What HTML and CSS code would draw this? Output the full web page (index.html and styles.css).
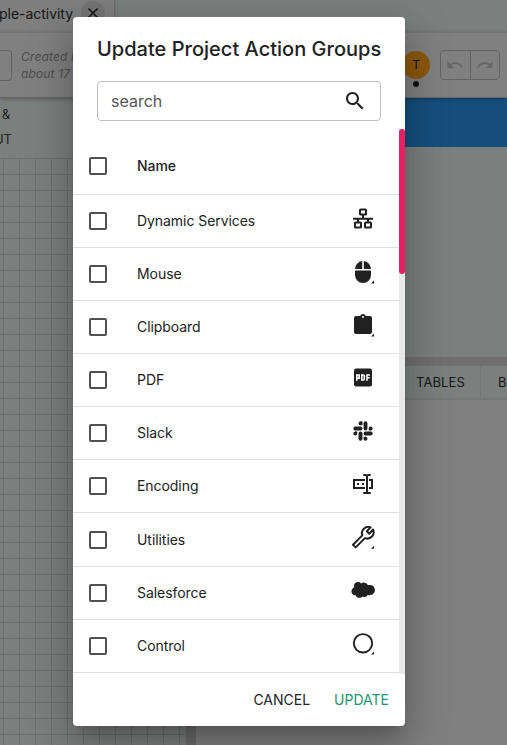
FILE: index.html
```html
<!DOCTYPE html>
<html lang="en">
<head>
<meta charset="utf-8">
<title>Update Project Action Groups</title>
<link rel="stylesheet" href="styles.css">
</head>
<body>
<div class="app">
  <div class="tabbar">
    <div class="file-tab"><span>ple-activity</span><span class="close"><svg width="12" height="12" viewBox="0 0 12 12"><path d="M1.500 1.500l9 9M10.500 1.500l-9 9" stroke="#111" stroke-width="1.500"/></svg></span></div>
  </div>
  <div class="toolbar">
    <div class="field-end"></div>
    <div class="created">Created by<br>about 17</div>
    <div class="presence"><div class="avatar">T</div><div class="dot"></div></div>
    <div class="history">
      <span><svg width="18" height="18" viewBox="0 0 24 24"><path d="M12.500 8c-2.650 0-5.050 1-6.900 2.600L2 7v9h9l-3.620-3.620c1.390-1.160 3.160-1.880 5.120-1.880 3.540 0 6.550 2.310 7.600 5.500l2.370-.78C21.080 11.030 17.150 8 12.500 8z"/></svg></span>
      <span><svg width="18" height="18" viewBox="0 0 24 24"><path d="M18.400 10.600C16.550 9 14.150 8 11.500 8c-4.650 0-8.580 3.030-9.960 7.220L3.900 16c1.050-3.190 4.050-5.500 7.600-5.500 1.950 0 3.730.72 5.120 1.880L13 16h9V7l-3.600 3.600z"/></svg></span>
    </div>
  </div>
  <div class="workspace">
    <div class="left">
      <div class="left-head"><span class="amp">&amp;</span><span>UT</span></div>
      <div class="canvas"></div>
    </div>
    <div class="split-v"></div>
    <div class="right">
      <div class="blue"></div>
      <div class="preview"></div>
      <div class="split-h"></div>
      <div class="tabs"><span class="tab tab-first">TABLES</span><span class="tab">B</span></div>
      <div class="output"></div>
    </div>
  </div>
</div>

<div class="dialog">
  <h2>Update Project Action Groups</h2>
  <div class="search"><span>search</span><svg width="24" height="24" viewBox="0 0 24 24"><path d="M15.500 14h-.79l-.28-.27C15.410 12.590 16 11.110 16 9.500 16 5.910 13.090 3 9.500 3S3 5.910 3 9.500 5.910 16 9.500 16c1.610 0 3.090-.59 4.230-1.570l.27.28v.79l5 4.990L20.490 19l-4.990-5zm-6 0C7.010 14 5 11.990 5 9.500S7.010 5 9.500 5 14 7.010 14 9.500 11.990 14 9.500 14z"/></svg></div>
  <div class="scroller">
    <div class="list">
      <div class="row head"><i class="box"></i><span>Name</span></div>
      <div class="row"><i class="box"></i><span>Dynamic Services</span>
        <svg class="icon" viewBox="0 0 24 24"><g fill="none" stroke="#212121" stroke-width="2"><rect x="9" y="2.500" width="6" height="5" rx=".6"/><rect x="4" y="15.500" width="6" height="5" rx=".6"/><rect x="14" y="15.500" width="6" height="5" rx=".6"/><path d="M12 7.500v4M2 11.700h20M7 12v3.500M17 12v3.500"/></g></svg></div>
      <div class="row"><i class="box"></i><span>Mouse</span>
        <svg class="icon" viewBox="0 0 24 24"><path d="M11.200 1.100V9H4a8 8 0 0 1 7.200-7.900zM12.800 1.100V9H20a8 8 0 0 0-7.200-7.900zM4 10.600h16V15a8 8 0 0 1-16 0z"/><path d="M23 20.500v3h-3z"/></svg></div>
      <div class="row"><i class="box"></i><span>Clipboard</span>
        <svg class="icon" viewBox="0 0 24 24"><path fill-rule="evenodd" d="M5 3h4.180a3 3 0 0 1 5.640 0H19a2 2 0 0 1 2 2v14a2 2 0 0 1-2 2H5a2 2 0 0 1-2-2V5a2 2 0 0 1 2-2zm7 0a1 1 0 1 0 0 2 1 1 0 0 0 0-2z"/><path d="M23 20.500v3h-3z"/></svg></div>
      <div class="row"><i class="box"></i><span>PDF</span>
        <svg class="icon" viewBox="0 0 24 24"><rect x="3" y="2.500" width="18" height="18" rx="2"/><g fill="none" stroke="#fff" stroke-width="1.600"><path d="M5.800 14.800V9h2.400v3.200H6M10.800 9h1.600q.9 0 .9.900v3.200q0 .9-.9.900h-1.600zM16 14.800V9h3M16 11.800h2.700"/></g></svg></div>
      <div class="row"><i class="box"></i><span>Slack</span>
        <svg class="icon" viewBox="0 0 24 24"><g stroke="#212121" stroke-width="3.900" stroke-linecap="round"><path d="M9.500 4.300v.01M4.300 9.500h5.200M14.500 4.300v5.200M19.700 9.500v.01M14.500 14.500h5.200M9.500 14.500v5.200M4.300 14.500v.01M14.500 19.700v.01"/></g><path d="M9.500 2.400h1.900v3.800H9.500zM17.800 9.500h1.900v1.900h-1.900zM12.600 17.800h1.900v1.900h-1.900zM4.300 12.600h1.900v1.900H4.300z"/></svg></div>
      <div class="row"><i class="box"></i><span>Encoding</span>
        <svg class="icon" viewBox="0 0 24 24"><g fill="none" stroke="#212121" stroke-width="2"><path d="M14 8H3v8h11M18 8h3v8h-3M12.300 3h1.700q2 0 2 1.600v14.800q0 1.600-2 1.600h-1.700M19.700 3H18q-2 0-2 1.600M16 19.400Q16 21 18 21h1.700"/></g><path d="M6 11h2v2H6zM11 11h2v2h-2z"/></svg></div>
      <div class="row"><i class="box"></i><span>Utilities</span>
        <svg class="icon" viewBox="0 0 24 24"><path d="M22 3.200a6.300 6.300 0 0 1-8 8.600L4.700 21.100 2 18.400l9.300-9.300a6.300 6.300 0 0 1 8.300-8L15.800 5l2.500 2.500z" transform="translate(0 .3)" fill="none" stroke="#212121" stroke-width="2" stroke-linejoin="round"/><path d="M23 19.800v3h-3z"/></svg></div>
      <div class="row"><i class="box"></i><span>Salesforce</span>
        <svg class="icon" viewBox="0 0 24 24"><path d="M10 5.300C8.600 3.300 4.600 3.200 3.300 6.200c-.5 1.100-.4 2.100 0 2.900C-.8 11-.5 17.200 4.600 17.100c1.100 3 5 3.500 6.900 1.200 1.600 1.200 4.300.6 5.200-1.300 3.800.9 7.200-1.200 7.200-5 0-4-3.700-6-7-4.800-1.200-2.800-4.900-3.600-6.900-1.900z" transform="translate(0 -.9)"/></svg></div>
      <div class="row"><i class="box"></i><span>Control</span>
        <svg class="icon" viewBox="0 0 24 24"><circle cx="12" cy="11.300" r="9.200" fill="none" stroke="#212121" stroke-width="1.900"/><path d="M23 19.500v3h-3z"/></svg></div>
    </div>
    <div class="track"><div class="thumb"></div></div>
  </div>
  <div class="actions"><span>CANCEL</span><span class="update">UPDATE</span></div>
</div>
</body>
</html>
```
FILE: styles.css
```css
* { box-sizing: border-box; }
body { margin: 0; width: 507px; height: 745px; overflow: hidden; font-family: Inter, "Liberation Sans", sans-serif; color: #212121; }
svg { display: block; flex: none; }
.app { display: flex; flex-direction: column; width: 507px; height: 745px; background: #7b7f7d; }
.tabbar { height: 32px; flex: none; }
.file-tab { width: 114px; height: 32px; display: flex; align-items: center; gap: 8px; padding-bottom: 6px; background: #7f7f7f; font-size: 14px; letter-spacing: -.03px; color: #151515; box-shadow: 1px 0 2px #666; white-space: nowrap; }
.file-tab span:first-child { margin-left: -1px; }
.close { width: 24px; height: 24px; border-radius: 50%; background: #757575; display: flex; align-items: center; justify-content: center; }
.toolbar { position: relative; height: 66px; flex: none; display: flex; align-items: center; background: #808080; border-top: 1px solid #747474; border-bottom: 1px solid #666; box-shadow: 0 1px 4px rgba(0,0,0,.3); }
.field-end { width: 12px; height: 31px; flex: none; border: 1px solid #626262; border-left: 0; border-radius: 0 4px 4px 0; }
.created { width: 381px; flex: none; margin-left: 9px; font-size: 12px; line-height: 17px; font-style: italic; color: #4d4d4d; letter-spacing: .15px; }
.presence { width: 28px; height: 39px; flex: none; display: flex; flex-direction: column; align-items: center; gap: 2px; margin-top: 11px; }
.avatar { width: 28px; height: 28px; flex: none; border-radius: 50%; background: #8c580d; font-size: 12px; line-height: 28px; text-align: center; color: #111; }
.dot { width: 6px; height: 6px; border-radius: 50%; background: #111; }
.history { display: flex; flex: none; width: 60px; height: 30px; margin-left: 10px; border: 1px solid #646464; border-radius: 4px; }
.history span { flex: 1; display: flex; align-items: center; justify-content: center; }
.history span + span { border-left: 1px solid #646464; }
.history svg { fill: #686868; }
.workspace { flex: 1; display: flex; min-height: 0; }
.left { width: 186px; display: flex; flex-direction: column; }
.left-head { width: 12px; height: 60px; padding-top: 4px; display: flex; flex-direction: column; align-items: flex-end; font-size: 13px; line-height: 25px; color: #222; }
.amp { margin-right: 2px; }
.canvas { flex: 1; background-image: linear-gradient(#6d706e 1px, transparent 1px), linear-gradient(90deg, #6d706e 1px, transparent 1px); background-size: 16px 16px; background-position: 3px 0; }
.split-v { width: 10px; background: #6c6c6c; }
.right { flex: 1; display: flex; flex-direction: column; min-width: 0; }
.blue { height: 49px; background: #164f7e; }
.preview { height: 210px; }
.split-h { height: 9px; background: #6f6f6f; }
.tabs { height: 34px; display: flex; padding-left: 209px; border-bottom: 2px solid #747776; font-size: 13px; line-height: 33px; color: #161616; }
.tab { padding-left: 17px; }
.tab-first { flex: none; width: 76px; padding-left: 11px; border-right: 1px solid #737675; letter-spacing: .1px; }
.output { flex: 1; background: #808080; }
.dialog { position: absolute; left: 73px; top: 17px; width: 332px; height: 709px; display: flex; flex-direction: column; background: #fff; border-radius: 4px; box-shadow: 0 11px 15px -7px rgba(0,0,0,.2), 0 24px 38px 3px rgba(0,0,0,.14), 0 9px 46px 8px rgba(0,0,0,.12); }
h2 { margin: 0; height: 64px; padding-left: 24px; font-size: 20px; line-height: 64px; font-weight: 500; letter-spacing: .02px; white-space: nowrap; }
.search { width: 284px; height: 40px; margin: 0 24px; display: flex; align-items: center; justify-content: space-between; padding: 0 13px; border: 1px solid #bdbdbd; border-radius: 4px; font-size: 16px; color: #555; }
.search svg { fill: #212121; }
.scroller { height: 545px; margin-top: 8px; display: flex; overflow: hidden; }
.list { width: 326px; padding-top: 8px; }
.row { display: flex; align-items: center; height: 53.09px; padding: 0 24px 0 16px; border-bottom: 1px solid #e0e0e0; font-size: 14px; letter-spacing: -.06px; }
.head { height: 58px; font-weight: 500; }
.row span { flex: 1; margin-left: 30px; padding-bottom: 1px; }
.box { width: 18px; height: 18px; border: 2px solid #505050; border-radius: 2px; }
.icon { width: 24px; height: 24px; fill: #212121; margin-top: -4px; }
.track { width: 6px; background: #e8e8e8; }
.thumb { width: 6px; height: 145px; border-radius: 3px; background: #e91e63; }
.actions { flex: 1; display: flex; align-items: center; justify-content: flex-end; gap: 24px; padding: 0 16px 2px; font-size: 14px; }
.update { color: #239375; }
```
